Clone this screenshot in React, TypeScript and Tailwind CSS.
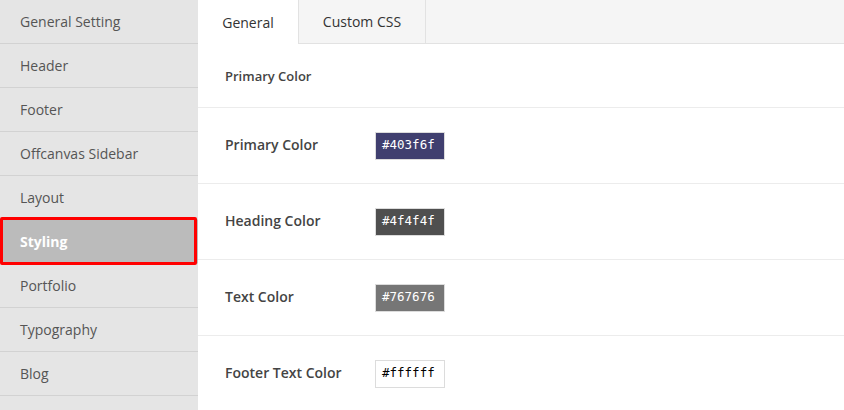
import React from "react";

const menu = [
  "General Setting",
  "Header",
  "Footer",
  "Offcanvas Sidebar",
  "Layout",
  "Styling",
  "Portfolio",
  "Typography",
  "Blog",
  "",
];

const colors = [
  { label: "Primary Color", value: "#403f6f", bg: "bg-[#403f6f]", text: "text-white" },
  { label: "Heading Color", value: "#4f4f4f", bg: "bg-[#4f4f4f]", text: "text-white" },
  { label: "Text Color", value: "#767676", bg: "bg-[#767676]", text: "text-white" },
  { label: "Footer Text Color", value: "#ffffff", bg: "bg-white", text: "text-black" },
];

export default function App() {
  return (
    <div className="flex w-[844px] h-[410px] overflow-hidden bg-white [font-family:'Open_Sans',sans-serif]">
      {/* Sidebar */}
      <div className="w-[198px] shrink-0 bg-[#e5e5e5] flex flex-col">
        {menu.map((item) =>
          item === "Styling" ? (
            <div
              key={item}
              className="relative h-[44px] shrink-0 flex items-center pl-[20px] bg-[#bbbbbb] border-b border-[#d2d2d2] text-white font-bold text-[14px]"
            >
              {item}
              {/* highlight frame */}
              <div className="absolute left-0 right-[1px] -top-[3px] -bottom-[2px] border-[3px] border-[#ff0000] rounded-[2px]" />
            </div>
          ) : (
            <div
              key={item || "empty"}
              className="h-[44px] shrink-0 flex items-center pl-[20px] border-b border-[#d2d2d2] text-[#555] text-[14px]"
            >
              {item}
            </div>
          )
        )}
      </div>

      {/* Main */}
      <div className="flex-1 flex flex-col">
        <div className="h-[44px] shrink-0 flex bg-[#f5f5f5] border-b border-[#e2e2e2]">
          <div className="w-[101px] h-[44px] flex items-center justify-center bg-white border-r border-[#e2e2e2] text-[14px] text-[#333]">
            General
          </div>
          <div className="w-[127px] flex items-center justify-center border-r border-[#e2e2e2] text-[14px] text-[#333]">
            Custom CSS
          </div>
        </div>

        <div className="h-[64px] shrink-0 flex items-center pl-[27px] pt-[3px] border-b border-[#ececec] text-[13px] font-semibold text-[#444]">
          Primary Color
        </div>

        {colors.map((c) => (
          <div
            key={c.label}
            className="h-[76px] shrink-0 flex items-center pl-[27px] border-b border-[#ececec]"
          >
            <div className="w-[150px] text-[14px] font-semibold text-[#444] -mt-[2px]">{c.label}</div>
            <div
              className={`w-[70px] h-[28px] flex items-center pl-[6px] border border-[#dcdcdc] ${c.bg} ${c.text} text-[12.5px] [font-family:'DejaVu_Sans_Mono',monospace]`}
            >
              {c.value}
            </div>
          </div>
        ))}
      </div>
    </div>
  );
}
